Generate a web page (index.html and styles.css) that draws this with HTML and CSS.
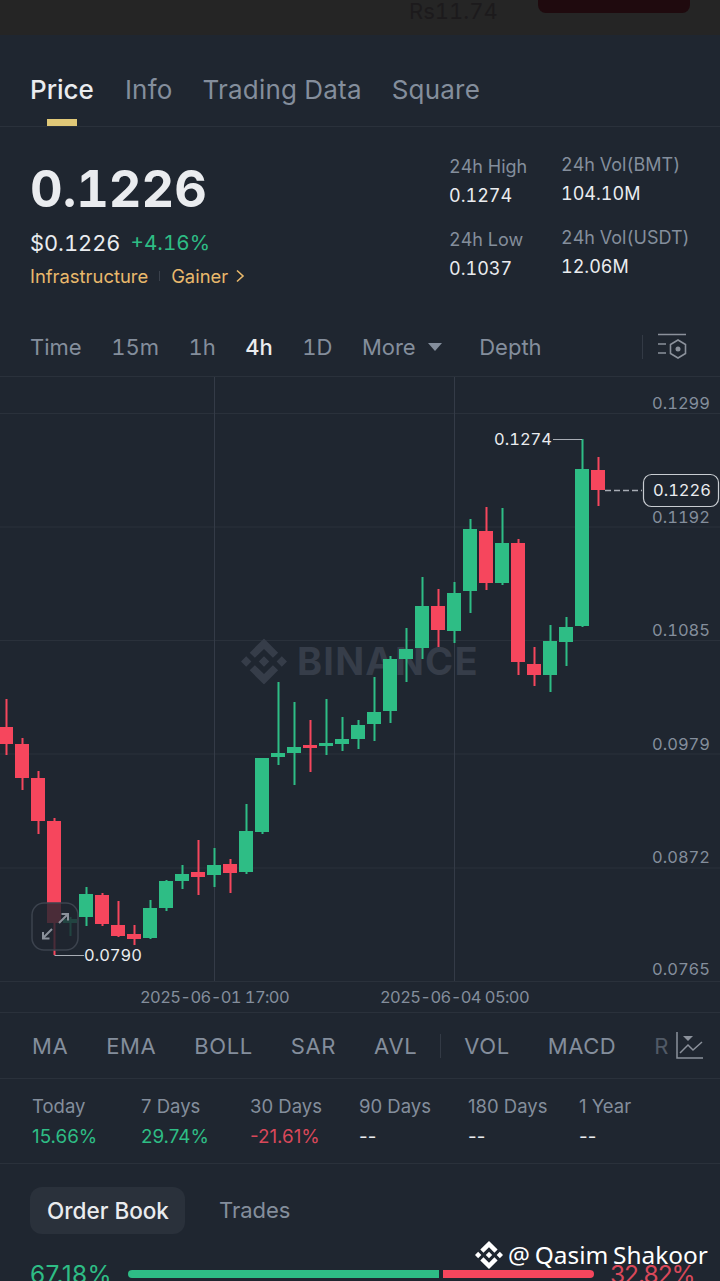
FILE: index.html
```html
<!DOCTYPE html>
<html lang="en">
<head>
    <meta charset="UTF-8">
    <meta name="viewport" content="width=device-width, initial-scale=1.0">
    <title>BMT Price</title>
    <link rel="stylesheet" href="styles.css">
</head>
<body>
    <div class="topbar">
        <span class="topbar-price">Rs11.74</span>
        <span class="topbar-btn"></span>
    </div>

    <nav class="tabs">
        <span class="tab active">Price</span>
        <span class="tab">Info</span>
        <span class="tab">Trading Data</span>
        <span class="tab">Square</span>
    </nav>

    <section class="summary">
        <div class="summary-main">
            <div class="big-price">0.1226</div>
            <div class="sub-price"><span>$0.1226</span><span class="sub-change up">+4.16%</span></div>
            <div class="tags">
                <span>Infrastructure</span>
                <i class="tag-sep"></i>
                <span>Gainer</span>
                <svg class="tag-arrow" width="10" height="14" viewBox="0 0 10 14"><path d="M2 1.5 L8 7 L2 12.5" fill="none" stroke="#e9b96c" stroke-width="1.6"/></svg>
            </div>
        </div>
        <div class="stat-col stat-col-a">
            <div class="stat"><span class="stat-label">24h High</span><span class="stat-value">0.1274</span></div>
            <div class="stat"><span class="stat-label">24h Low</span><span class="stat-value">0.1037</span></div>
        </div>
        <div class="stat-col stat-col-b">
            <div class="stat"><span class="stat-label">24h Vol(BMT)</span><span class="stat-value">104.10M</span></div>
            <div class="stat"><span class="stat-label">24h Vol(USDT)</span><span class="stat-value">12.06M</span></div>
        </div>
    </section>

    <div class="intervals">
        <span class="interval">Time</span>
        <span class="interval">15m</span>
        <span class="interval">1h</span>
        <span class="interval active">4h</span>
        <span class="interval">1D</span>
        <span class="interval">More <i class="caret"></i></span>
        <span class="interval depth">Depth</span>
        <i class="interval-sep"></i>
        <svg class="interval-icon" width="30" height="26" viewBox="0 0 30 26" fill="none" stroke="#8b919b" stroke-width="1.6">
            <path d="M1 1.5 H29 M1 11 H9 M1 20 H9"/>
            <path d="M21 7 L28.5 11.5 V20.5 L21 25 L13.5 20.5 V11.5 Z"/>
            <circle cx="21" cy="16" r="2.5" fill="#8b919b" stroke="none"/>
        </svg>
    </div>

    <svg class="chart" width="720" height="636" viewBox="0 376 720 636">
        <g class="grid">
            <path d="M0 376.5 H720 M0 413.5 H720 M0 527 H720 M0 640.5 H720 M0 754 H720 M0 868 H720 M0 981.5 H720"/>
            <path class="grid-v" d="M214.5 377 V981 M454.5 377 V981"/>
        </g>

        <g class="watermark">
            <svg x="241" y="638.5" width="46" height="46" viewBox="0 0 126.6 126.6">
                <path d="M38.2 53.2 L63.3 28.6 L87.9 53.2 L102.2 38.9 L63.3 0 L23.9 38.9 Z M0 63.3 L14.3 49 L28.6 63.3 L14.3 77.6 Z M38.2 73.4 L63.3 98 L87.9 73.4 L102.2 87.7 L63.3 126.6 L23.9 87.7 Z M98 63.3 L112.3 49 L126.6 63.3 L112.3 77.6 Z M77.8 63.3 L63.3 48.8 L48.8 63.3 L63.3 77.8 Z"/>
            </svg>
            <text x="297" y="675" class="watermark-text">BINANCE</text>
        </g>

        <g class="candles up">
            <rect x="69.5" y="917" width="2" height="19"/><rect x="63" y="919" width="14" height="4"/>
        </g>
        <g class="candles down">
            <rect x="5.5" y="699" width="2" height="56"/><rect x="-1" y="727" width="14" height="17"/>
            <rect x="21.5" y="738" width="2" height="52"/><rect x="15" y="744" width="14" height="34"/>
            <rect x="37.5" y="771" width="2" height="63"/><rect x="31" y="778" width="14" height="43"/>
            <rect x="53.5" y="818" width="2" height="137"/><rect x="47" y="821" width="14" height="102"/>
            <rect x="101.5" y="893" width="2" height="33"/><rect x="95" y="895" width="14" height="29"/>
            <rect x="117.5" y="901" width="2" height="36"/><rect x="111" y="925" width="14" height="11"/>
            <rect x="133.5" y="925" width="2" height="20"/><rect x="127" y="934" width="14" height="5"/>
            <rect x="197.5" y="840" width="2" height="55"/><rect x="191" y="872" width="14" height="5"/>
            <rect x="229.5" y="859" width="2" height="34"/><rect x="223" y="864" width="14" height="9"/>
            <rect x="309.5" y="720" width="2" height="52"/><rect x="303" y="745" width="14" height="3"/>
            <rect x="437.5" y="589" width="2" height="58"/><rect x="431" y="606" width="14" height="24"/>
            <rect x="485.5" y="507" width="2" height="83"/><rect x="479" y="531" width="14" height="52"/>
            <rect x="517.5" y="539" width="2" height="136"/><rect x="511" y="543" width="14" height="119"/>
            <rect x="533.5" y="647" width="2" height="39"/><rect x="527" y="664" width="14" height="11"/>
            <rect x="597.5" y="457" width="2" height="49"/><rect x="591" y="470" width="14" height="20"/>
        </g>
        <g class="candles up">
            <rect x="85.5" y="887" width="2" height="39"/><rect x="79" y="894" width="14" height="23"/>
            <rect x="149.5" y="900" width="2" height="39"/><rect x="143" y="908" width="14" height="30"/>
            <rect x="165.5" y="880" width="2" height="31"/><rect x="159" y="881" width="14" height="27"/>
            <rect x="181.5" y="865" width="2" height="24"/><rect x="175" y="874" width="14" height="7"/>
            <rect x="213.5" y="848" width="2" height="39"/><rect x="207" y="865" width="14" height="10"/>
            <rect x="245.5" y="804" width="2" height="70"/><rect x="239" y="831" width="14" height="41"/>
            <rect x="261.5" y="758" width="2" height="76"/><rect x="255" y="758" width="14" height="74"/>
            <rect x="277.5" y="682" width="2" height="83"/><rect x="271" y="753" width="14" height="4"/>
            <rect x="293.5" y="702" width="2" height="83"/><rect x="287" y="747" width="14" height="6"/>
            <rect x="325.5" y="699" width="2" height="56"/><rect x="319" y="743" width="14" height="3"/>
            <rect x="341.5" y="717" width="2" height="34"/><rect x="335" y="739" width="14" height="5"/>
            <rect x="357.5" y="720" width="2" height="29"/><rect x="351" y="725" width="14" height="14"/>
            <rect x="373.5" y="677" width="2" height="64"/><rect x="367" y="712" width="14" height="12"/>
            <rect x="389.5" y="656" width="2" height="67"/><rect x="383" y="659" width="14" height="52"/>
            <rect x="405.5" y="628" width="2" height="54"/><rect x="399" y="649" width="14" height="10"/>
            <rect x="421.5" y="577" width="2" height="82"/><rect x="415" y="606" width="14" height="42"/>
            <rect x="453.5" y="582" width="2" height="61"/><rect x="447" y="593" width="14" height="38"/>
            <rect x="469.5" y="519" width="2" height="94"/><rect x="463" y="529" width="14" height="62"/>
            <rect x="501.5" y="508" width="2" height="77"/><rect x="495" y="543" width="14" height="40"/>
            <rect x="549.5" y="625" width="2" height="67"/><rect x="543" y="641" width="14" height="34"/>
            <rect x="565.5" y="617" width="2" height="49"/><rect x="559" y="627" width="14" height="15"/>
            <rect x="581.5" y="439" width="2" height="188"/><rect x="575" y="469" width="14" height="157"/>
        </g>

        <g class="expand-btn">
            <rect class="expand-box" x="32" y="903" width="46" height="47" rx="12"/>
            <path d="M43 938 L52 929 M43 932 V938.5 H49.5 M59 923 L68 914 M61.5 914 H68 V920.5"/>
        </g>

        <path class="low-line" d="M54.5 955.5 H84"/>
        <path class="high-line" d="M553 439.5 H582"/>
        <text x="84" y="961" class="mark">0.0790</text>
        <text x="552" y="445" class="mark" text-anchor="end">0.1274</text>

        <g class="axis">
            <text x="710" y="409" text-anchor="end">0.1299</text>
            <text x="710" y="523" text-anchor="end">0.1192</text>
            <text x="710" y="636" text-anchor="end">0.1085</text>
            <text x="710" y="750" text-anchor="end">0.0979</text>
            <text x="710" y="863" text-anchor="end">0.0872</text>
            <text x="710" y="975" text-anchor="end">0.0765</text>
            <text x="214.5" y="1003" class="axis-date" text-anchor="middle">2025-06-01 17:00</text>
            <text x="454.5" y="1003" class="axis-date" text-anchor="middle">2025-06-04 05:00</text>
        </g>

        <path class="last-line" d="M605 490.5 H642"/>
        <rect class="last-box" x="643.5" y="474.5" width="75" height="32" rx="8"/>
        <text x="682" y="496" class="last-text" text-anchor="middle">0.1226</text>
    </svg>

    <div class="indicators">
        <span>MA</span>
        <span>EMA</span>
        <span>BOLL</span>
        <span>SAR</span>
        <span>AVL</span>
        <i class="indicator-sep"></i>
        <span>VOL</span>
        <span>MACD</span>
        <span class="faded">R</span>
        <svg class="indicator-icon" width="30" height="30" viewBox="0 0 30 30" fill="none" stroke="#8b919b" stroke-width="1.5">
            <path d="M2 1 V27 H28"/>
            <path d="M5 22 L13 14 L18 19 L27 11"/>
            <path d="M8 5 H18 L13 10 Z" fill="#8b919b" stroke="none"/>
        </svg>
    </div>

    <div class="returns">
        <div class="ret"><span class="ret-label">Today</span><span class="ret-value up">15.66%</span></div>
        <div class="ret"><span class="ret-label">7 Days</span><span class="ret-value up">29.74%</span></div>
        <div class="ret"><span class="ret-label">30 Days</span><span class="ret-value down-text">-21.61%</span></div>
        <div class="ret"><span class="ret-label">90 Days</span><span class="ret-value">--</span></div>
        <div class="ret ret-wide"><span class="ret-label">180 Days</span><span class="ret-value">--</span></div>
        <div class="ret"><span class="ret-label">1 Year</span><span class="ret-value">--</span></div>
    </div>

    <div class="book-tabs">
        <span class="book-tab active">Order Book</span>
        <span class="book-tab">Trades</span>
    </div>

    <div class="ratio">
        <span class="up ratio-buy-text">67.18%</span>
        <div class="ratio-bar">
            <i class="ratio-buy"></i>
            <i class="ratio-sell"></i>
        </div>
        <span class="down-text ratio-sell-text">32.82%</span>
    </div>

    <div class="credit">
        <svg width="28" height="28" viewBox="0 0 126.6 126.6" fill="#fff">
            <path d="M38.2 53.2 L63.3 28.6 L87.9 53.2 L102.2 38.9 L63.3 0 L23.9 38.9 Z M0 63.3 L14.3 49 L28.6 63.3 L14.3 77.6 Z M38.2 73.4 L63.3 98 L87.9 73.4 L102.2 87.7 L63.3 126.6 L23.9 87.7 Z M98 63.3 L112.3 49 L126.6 63.3 L112.3 77.6 Z M77.8 63.3 L63.3 48.8 L48.8 63.3 L63.3 77.8 Z"/>
        </svg>
        <span>@ Qasim Shakoor</span>
    </div>
</body>
</html>
```

FILE: styles.css
```css
* {
    box-sizing: border-box;
}
html, body {
    height: 1281px;
    overflow: hidden;
}
body {
    position: relative;
    margin: 0;
    background-color: #1f2630;
    color: #eaecef;
    font-family: Inter, "Liberation Sans", sans-serif;
    font-variant-numeric: tabular-nums;
}
i {
    display: block;
}
.up {
    color: #2ebd85;
}
.down-text {
    color: #d9485a;
}

/* top strip left over from the screen behind */
.topbar {
    height: 35px;
    background-color: #252525;
    position: relative;
}
.topbar-price {
    position: absolute;
    left: 409px;
    top: 0;
    font-size: 22px;
    line-height: 23px;
    color: #1c1a1c;
}
.topbar-btn {
    position: absolute;
    left: 538px;
    top: -8px;
    width: 152px;
    height: 21px;
    background-color: #1f0a0e;
    border-radius: 8px;
}

.tabs {
    height: 92px;
    position: relative;
    display: flex;
    gap: 30px;
    padding: 38px 0 0 30px;
    border-bottom: 1px solid #2a313b;
}
.tab {
    font-size: 26px;
    line-height: 34px;
    letter-spacing: 0.2px;
    color: #848e9c;
}
.tab.active {
    color: #eaecef;
    font-weight: 500;
    letter-spacing: 0;
    margin-right: 1px;
    position: relative;
}
.tab.active::after {
    content: "";
    position: absolute;
    left: 17px;
    top: 46px;
    width: 30px;
    height: 7px;
    background-color: #e0c878;
}

.summary {
    height: 195px;
    display: flex;
    padding-left: 30px;
}
.summary-main {
    width: 419px;
    padding-top: 32px;
}
.big-price {
    font-size: 50.5px;
    line-height: 60px;
    font-weight: 700;
}
.sub-price {
    display: flex;
    align-items: center;
    gap: 10px;
    margin-top: 9px;
    font-size: 21.8px;
    line-height: 30px;
}
.sub-change {
    font-size: 20.7px;
}
.tags {
    display: flex;
    align-items: center;
    margin-top: 6px;
    font-size: 18.4px;
    line-height: 24px;
    color: #e9b96c;
}
.tag-sep {
    width: 1px;
    height: 10px;
    margin: 0 11px;
    background-color: #3a414c;
}
.tag-arrow {
    margin-left: 7px;
}
.stat-col {
    display: flex;
    flex-direction: column;
}
.stat-col-a {
    width: 112px;
    padding-top: 28px;
    gap: 20px;
}
.stat-col-b {
    padding-top: 26px;
    gap: 20px;
}
.stat {
    display: flex;
    flex-direction: column;
    gap: 5px;
}
.stat-label {
    font-size: 18px;
    line-height: 24px;
    color: #848e9c;
}
.stat-value {
    font-size: 18px;
    line-height: 24px;
}

.intervals {
    height: 54px;
    display: flex;
    align-items: center;
    padding: 0 0 4px 30px;
}
.interval {
    font-size: 22px;
    color: #848e9c;
    margin-right: 29.5px;
    display: flex;
    align-items: center;
}
.interval.active {
    color: #eaecef;
    font-weight: 500;
}
.interval.depth {
    margin-right: 0;
    margin-left: 8px;
}
.caret {
    width: 0;
    height: 0;
    margin-left: 12px;
    border-left: 7px solid transparent;
    border-right: 7px solid transparent;
    border-top: 8px solid #848e9c;
}
.interval-sep {
    width: 1px;
    height: 24px;
    margin-left: auto;
    margin-right: 14px;
    background-color: #333a45;
}
.interval-icon {
    margin: -2px 33px 0 0;
}

.chart {
    display: block;
}
.grid path {
    fill: none;
    stroke: #2a313b;
    stroke-width: 1;
}
.grid .grid-v {
    stroke: #343b47;
}
.watermark path {
    fill: #363d49;
}
.watermark-text {
    font-size: 38px;
    font-weight: 700;
    letter-spacing: 1.2px;
    fill: #363d49;
}
.candles.down {
    fill: #f6465d;
}
.candles.up {
    fill: #2ebd85;
}
.expand-box {
    fill: #1f2630;
    fill-opacity: 0.8;
    stroke: #3c434e;
    stroke-width: 1.5;
}
.expand-btn path {
    fill: none;
    stroke: #8b919b;
    stroke-width: 2;
}
.low-line, .high-line {
    fill: none;
    stroke: #a8adb5;
    stroke-width: 1;
}
.mark {
    font-size: 16.5px;
    fill: #eaecef;
}
.axis text {
    font-size: 16.5px;
    fill: #848e9c;
}
.axis .axis-date {
    letter-spacing: -0.6px;
}
.last-line {
    fill: none;
    stroke: #a8adb5;
    stroke-width: 1.5;
    stroke-dasharray: 6 3;
}
.last-box {
    fill: #1f2630;
    stroke: #c8ccd1;
    stroke-width: 1.2;
}
.last-text {
    font-size: 16.5px;
    fill: #eaecef;
}

.indicators {
    height: 67px;
    display: flex;
    align-items: center;
    gap: 38px;
    padding: 1px 0 0 32px;
    border-top: 1px solid #2a313b;
    border-bottom: 1px solid #2a313b;
    font-size: 22px;
    letter-spacing: 0.6px;
    color: #848e9c;
    position: relative;
}
.indicator-sep {
    width: 1px;
    height: 24px;
    margin: 0 -15px;
    background-color: #333a45;
}
.faded {
    opacity: 0.5;
}
.indicator-icon {
    position: absolute;
    left: 675px;
    top: 18px;
}

.returns {
    height: 85px;
    display: flex;
    padding: 15px 0 0 32px;
    border-bottom: 1px solid #2a313b;
    font-variant-numeric: proportional-nums;
}
.ret {
    width: 109px;
    display: flex;
    flex-direction: column;
    gap: 7px;
}
.ret-wide {
    width: 111px;
}
.ret-label {
    font-size: 18.5px;
    line-height: 24px;
    color: #848e9c;
}
.ret-value {
    font-size: 18.8px;
    line-height: 24px;
}

.book-tabs {
    display: flex;
    align-items: center;
    gap: 34px;
    padding: 23px 0 0 30px;
}
.book-tab {
    font-size: 22px;
    line-height: 47px;
    color: #848e9c;
}
.book-tab.active {
    padding: 0 16px 0 17px;
    border-radius: 12px;
    background-color: #2a313b;
    color: #eaecef;
    font-size: 22.5px;
    font-weight: 500;
}

.ratio {
    display: flex;
    align-items: center;
    height: 26px;
    margin-top: 27px;
    padding-left: 30px;
    font-size: 24.5px;
    font-variant-numeric: proportional-nums;
}
.ratio-buy-text {
    letter-spacing: 0.3px;
}
.ratio-sell-text {
    letter-spacing: -1px;
}
.ratio-bar {
    display: flex;
    gap: 4px;
    width: 466px;
    height: 8px;
    margin: 0 16px;
}
.ratio-buy {
    width: 311px;
    background-color: #2ebd85;
    border-radius: 4px 0 0 4px;
}
.ratio-sell {
    width: 151px;
    background-color: #f6465d;
    border-radius: 0 4px 4px 0;
}

.credit {
    position: absolute;
    left: 475px;
    top: 1241px;
    display: flex;
    align-items: center;
    gap: 5px;
    color: #fff;
    font-family: "Noto Sans", sans-serif;
    font-size: 24.4px;
    word-spacing: -1.5px;
    line-height: 28px;
}
```
